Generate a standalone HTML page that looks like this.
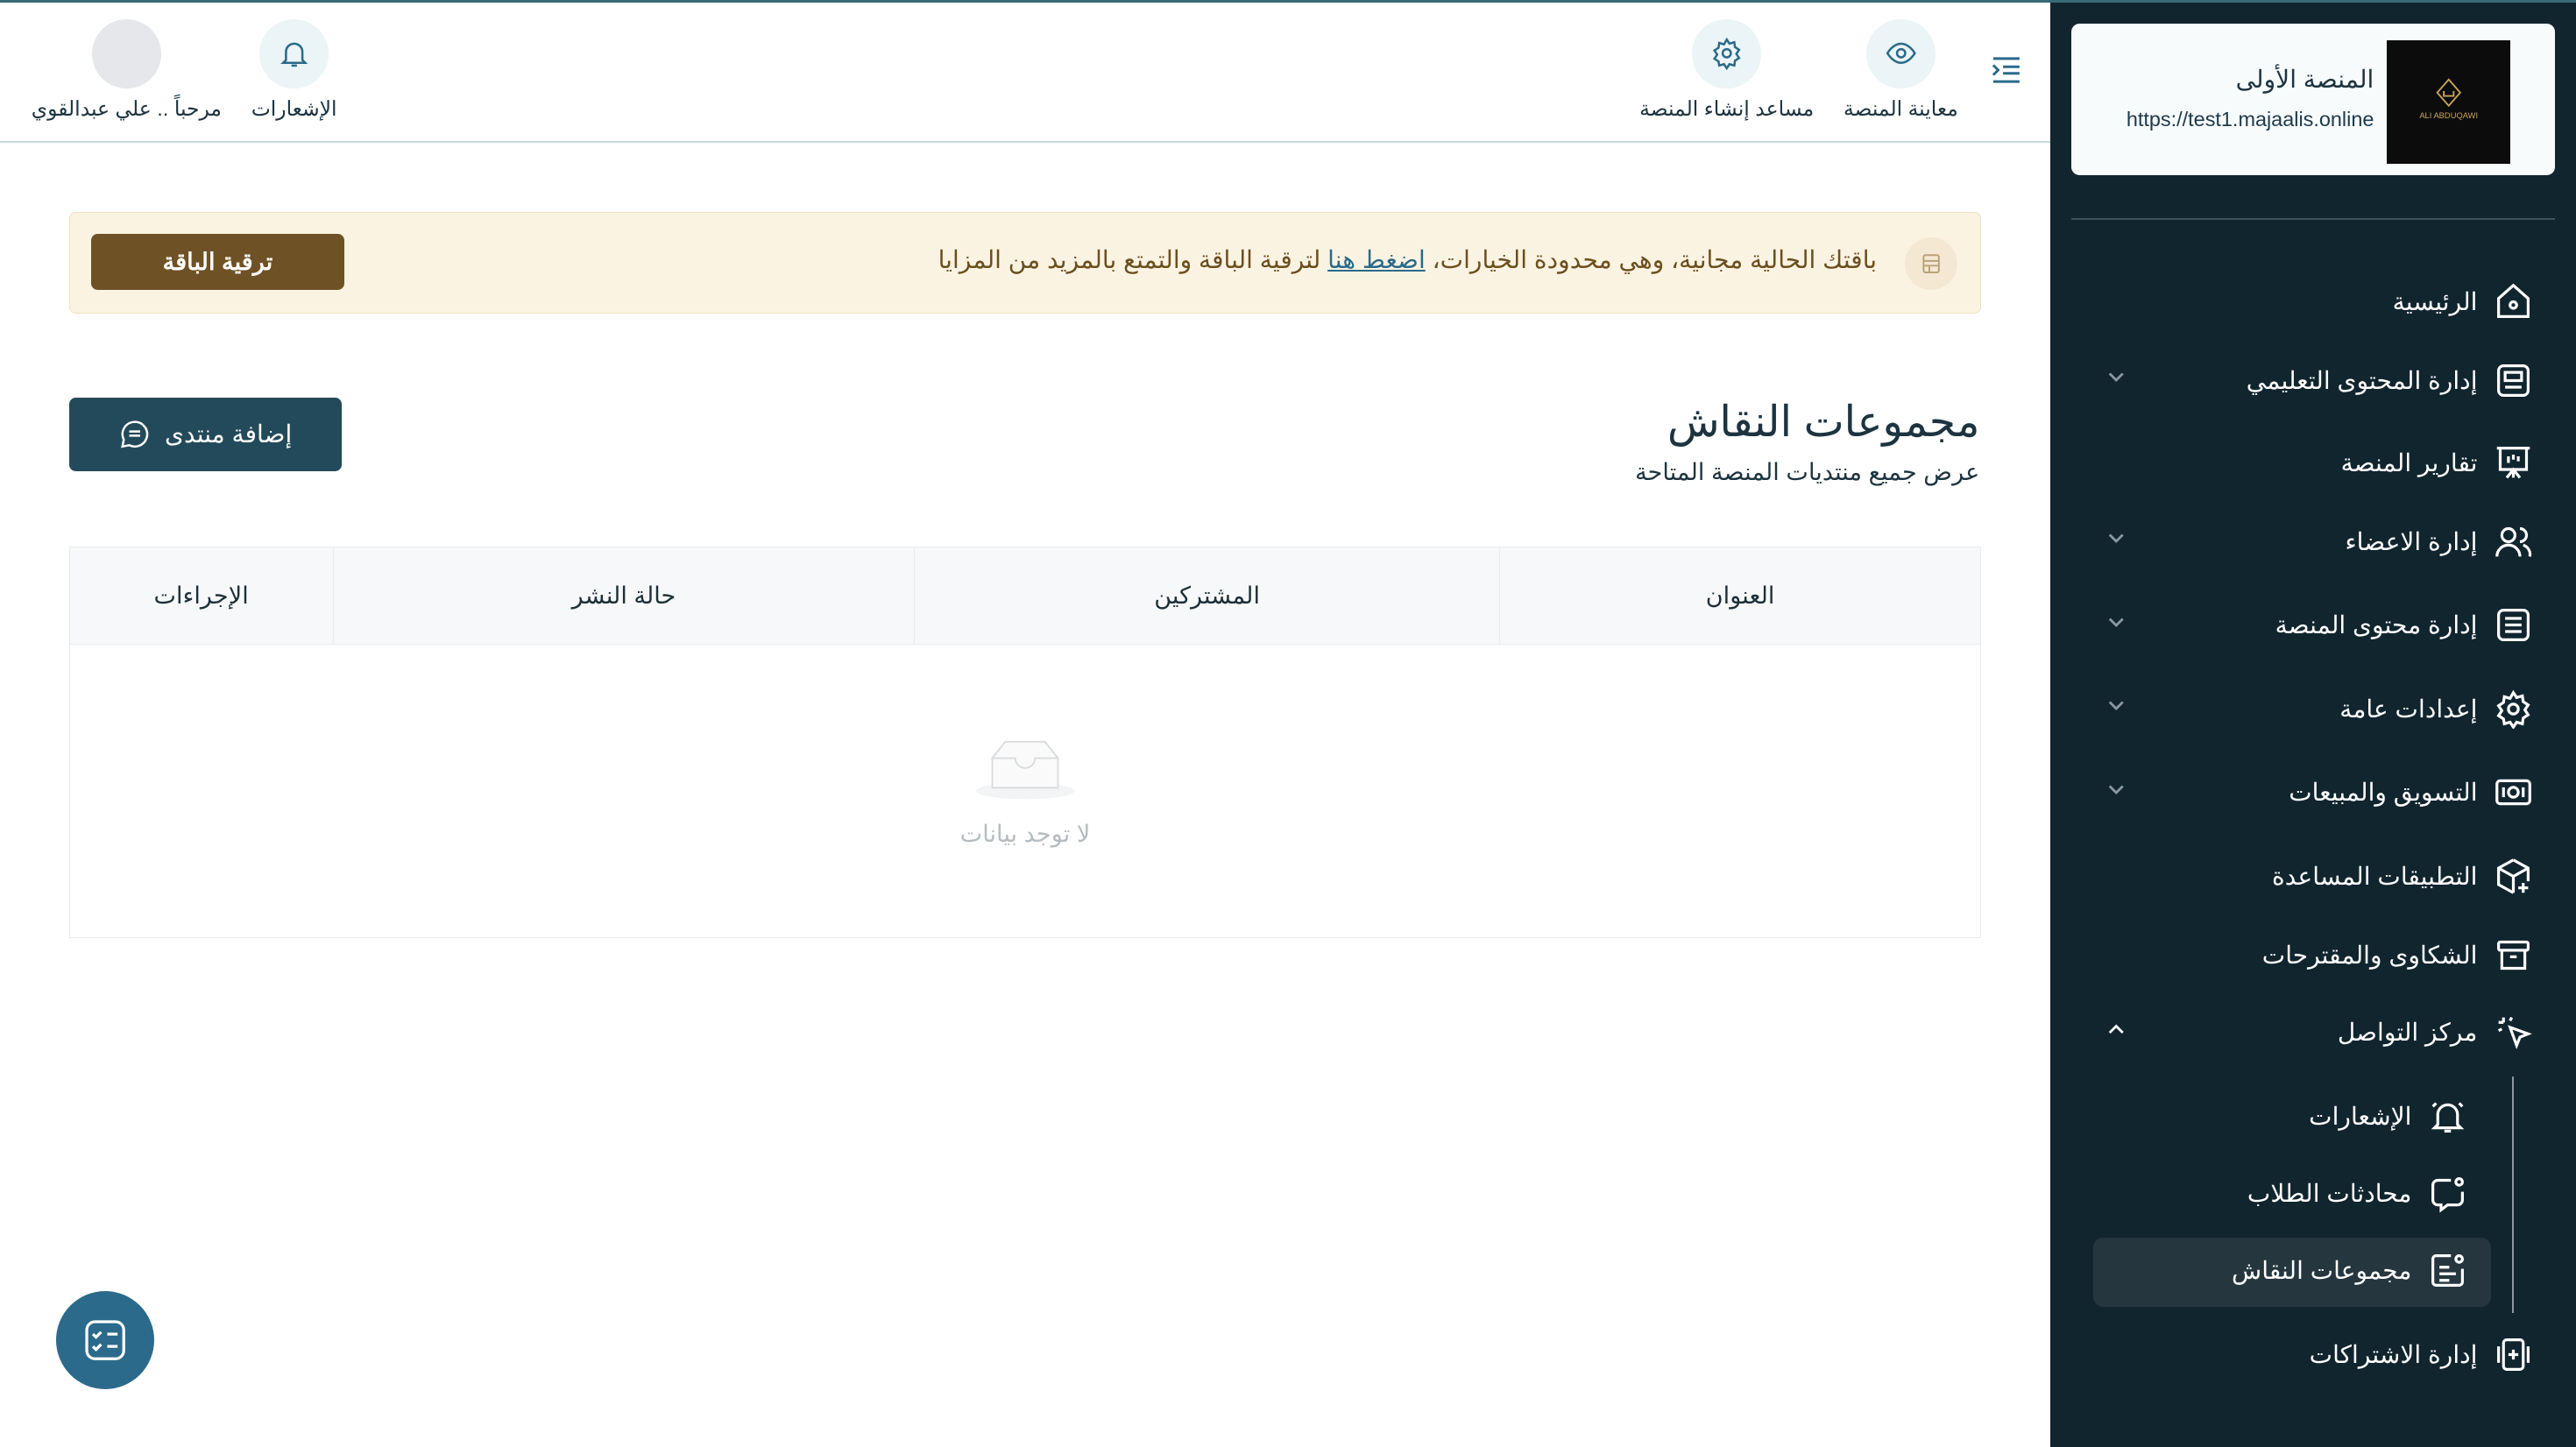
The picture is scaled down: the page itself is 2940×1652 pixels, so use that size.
<!DOCTYPE html>
<html lang="ar" dir="rtl"><head><meta charset="utf-8">
<style>
html{zoom:1.875}
*{box-sizing:border-box;margin:0;padding:0}
body{width:1568px;height:881px;overflow:hidden;background:#fff;font-family:"Liberation Sans","Noto Sans CJK SC",sans-serif;color:#1d2f38;position:relative}
.side{position:absolute;right:0;top:0;width:320px;height:881px;background:#11252f;border-top:2px solid #3a6b74}
.card{position:absolute;right:13px;top:13px;width:294px;height:92px;background:#f8fbfc;border-radius:5px}
.logo{position:absolute;right:27px;top:10px;width:75px;height:75px;background:#0c0c0c;color:#c9a45a;font-size:5px;text-align:center}
.card .t{position:absolute;right:110px;top:25px;font-size:15px;color:#1d3440}
.card .u{position:absolute;right:110px;top:51px;font-size:12.5px;color:#1d3a4a;direction:ltr}
.hr{position:absolute;right:13px;top:131px;width:294px;height:1px;background:#3e525c}
.item{position:absolute;right:26px;height:28px;display:flex;align-items:center;color:#fff;font-size:15px;gap:10px;width:260px}
.item svg{width:24px;height:24px;flex:none}
.chev{position:absolute;left:0;top:6px}
.sub{right:66px;width:200px}
.active{position:absolute;right:52px;top:752px;width:242px;height:42px;background:#25363f;border-radius:6px}
.vline{position:absolute;right:38px;top:654px;width:1px;height:144px;background:#8a99a0}
.top{position:absolute;left:0;top:0;width:1248px;height:87px;border-top:2px solid #3a6b74;border-bottom:1.5px solid #c5d9de}
.hb{position:absolute;top:10px;text-align:center;font-size:12.5px;color:#1d3440}
.circ{width:42px;height:42px;border-radius:50%;background:#ebf4f6;margin:0 auto 5px;display:flex;align-items:center;justify-content:center}
.banner{position:absolute;left:42px;top:129px;width:1164px;height:62px;background:#fbf3e2;border:1px solid #f0e0bd;border-radius:4px}
.banner .txt{position:absolute;right:63px;top:20px;font-size:15px;color:#6b4f1f}
.banner a{color:#2b6a8a;text-decoration:underline}
.bicon{position:absolute;right:14px;top:15px;width:32px;height:32px;border-radius:50%;background:#f4e8d3;display:flex;align-items:center;justify-content:center}
.upg{position:absolute;left:13px;top:13px;width:154px;height:34px;background:#6e5125;border-radius:4px;color:#fff;font-size:14.5px;font-weight:bold;text-align:center;line-height:34px}
h1{position:absolute;right:363px;top:242px;font-size:26px;font-weight:normal;color:#1d3440}
.subt{position:absolute;right:363px;top:279px;font-size:14.5px;color:#1d3440}
.add{position:absolute;left:42px;top:242px;width:166px;height:45px;background:#234a5a;border-radius:4px;color:#fff;font-size:15px;display:flex;align-items:center;justify-content:center;gap:8px}
.tbl{position:absolute;left:42px;top:333px;width:1164px;height:238px;border:1px solid #e8ecee}
.th{position:absolute;top:0;height:59px;background:#f7f8f9;border-bottom:1px solid #e8ecee;font-size:14.5px;line-height:59px;text-align:center;border-left:1px solid #e8ecee}
.empty{position:absolute;left:0;right:0;top:108px;text-align:center;color:#b4bcc0;font-size:14.5px}
.fab{position:absolute;left:34px;top:786px;width:60px;height:60px;border-radius:50%;background:#2b6a8a;display:flex;align-items:center;justify-content:center}
</style></head><body>
<div class="top">
 <svg style="position:absolute;left:1212px;top:33px" width="18" height="16" viewBox="0 0 18 16" fill="none" stroke="#2b6a8a" stroke-width="1.6"><path d="M1 1h16M7 6h10M7 10h10M1 15h16M1 5l3 3-3 3"/></svg>
 <div class="hb" style="left:1115px;width:84px"><div class="circ"><svg width="20" height="20" viewBox="0 0 24 24" fill="none" stroke="#2b6a8a" stroke-width="1.6"><path d="M2 12s4-7 10-7 10 7 10 7-4 7-10 7S2 12 2 12z"/><circle cx="12" cy="12" r="3"/></svg></div>معاينة المنصة</div>
 <div class="hb" style="left:993px;width:116px"><div class="circ"><svg width="20" height="20" viewBox="0 0 24 24" fill="none" stroke="#2b6a8a" stroke-width="1.6"><circle cx="12" cy="12" r="3"/><path d="M12 2l2 3 3.5-1 .5 3.5 3 2-2 3 2 3-3 2-.5 3.5-3.5-1-2 3-2-3-3.5 1L6 18l-3-2 2-3-2-3 3-2 .5-3.5 3.5 1z"/></svg></div>مساعد إنشاء المنصة</div>
 <div class="hb" style="left:148px;width:62px"><div class="circ"><svg width="20" height="20" viewBox="0 0 24 24" fill="none" stroke="#2b6a8a" stroke-width="1.6"><path d="M6 17V11a6 6 0 0112 0v6l2 2H4zM10 21h4"/></svg></div>الإشعارات</div>
 <div class="hb" style="left:10px;width:134px"><div class="circ" style="background:#e5e7ea"></div>مرحباً .. علي عبدالقوي</div>
</div>
<div class="banner"><div class="bicon"><svg width="14" height="14" viewBox="0 0 24 24" fill="none" stroke="#b9a27a" stroke-width="1.8"><rect x="4" y="3" width="16" height="18" rx="2"/><path d="M4 9h16M4 14h16M10 14v7"/></svg></div><div class="txt">باقتك الحالية مجانية، وهي محدودة الخيارات، <a>اضغط هنا</a> لترقية الباقة والتمتع بالمزيد من المزايا</div><div class="upg">ترقية الباقة</div></div>
<h1>مجموعات النقاش</h1>
<div class="subt">عرض جميع منتديات المنصة المتاحة</div>
<div class="add"><span>إضافة منتدى</span><svg width="20" height="20" viewBox="0 0 24 24" fill="none" stroke="#fff" stroke-width="1.6"><path d="M12 3a9 9 0 00-8 13l-1 5 5-1A9 9 0 1012 3zM8 10h8M8 13h8"/></svg></div>
<div class="tbl">
 <div class="th" style="right:0;width:293px;border-left:1px solid #e8ecee">العنوان</div>
 <div class="th" style="right:293px;width:356px">المشتركين</div>
 <div class="th" style="right:649px;width:354px">حالة النشر</div>
 <div class="th" style="right:1003px;width:160px;border-left:none">الإجراءات</div>
 <div class="empty"><svg width="64" height="46" viewBox="0 0 64 46"><ellipse cx="32" cy="40" rx="30" ry="5" fill="#f3f4f5"/><path d="M12 20l8-10h24l8 10v18H12z" fill="#fafafa" stroke="#d9dcde"/><path d="M12 20h14a6 6 0 0012 0h14" fill="none" stroke="#d9dcde"/></svg><div style="margin-top:8px">لا توجد بيانات</div></div>
</div>
<div class="fab"><svg width="30" height="30" viewBox="0 0 24 24" fill="none" stroke="#fff" stroke-width="1.4"><rect x="3" y="3" width="18" height="18" rx="4"/><path d="M6 9l1.5 1.5L10 8M6 15l1.5 1.5L10 14M13 9h5M13 15h5"/></svg></div>

<div class="side">
 <div class="card"><div class="logo"><svg width="20" height="20" viewBox="0 0 20 20" style="margin-top:22px" fill="none" stroke="#c9a45a"><path d="M10 2l7 8-7 8-7-8z"/><path d="M7 9v3h6V9"/></svg><div>ALI ABDUQAWI</div></div><div class="t">المنصة الأولى</div><div class="u">https://test1.majaalis.online</div></div>
 <div class="hr"></div>
 <div class="active"></div><div class="vline"></div>
 <div class="item" style="top:168px"><svg viewBox="0 0 24 24" fill="none" stroke="#fff" stroke-width="1.7"><path d="M3 10l9-8 9 8v11H3z"/><circle cx="12" cy="14" r="2"/></svg>الرئيسية</div>
 <div class="item" style="top:216px"><svg viewBox="0 0 24 24" fill="none" stroke="#fff" stroke-width="1.7"><rect x="3" y="3" width="18" height="18" rx="3"/><rect x="7" y="7" width="10" height="5"/><path d="M7 16h10"/></svg>إدارة المحتوى التعليمي<svg class="chev" style="width:12px;height:12px" viewBox="0 0 12 12" fill="none" stroke="#8a99a0" stroke-width="1.5"><path d="M2 4l4 4 4-4"/></svg></div>
 <div class="item" style="top:266px"><svg viewBox="0 0 24 24" fill="none" stroke="#fff" stroke-width="1.7"><path d="M2 3h20M4 3v13h16V3M9 8v4M12 7v3M15 8v3M12 16v5M8 21l4-5 4 5"/></svg>تقارير المنصة</div>
 <div class="item" style="top:314px"><svg viewBox="0 0 24 24" fill="none" stroke="#fff" stroke-width="1.7"><circle cx="9" cy="8" r="4"/><path d="M2 21a7 7 0 0114 0M16 4a4 4 0 010 8M18 14a6 6 0 014 7"/></svg>إدارة الاعضاء<svg class="chev" style="width:12px;height:12px" viewBox="0 0 12 12" fill="none" stroke="#8a99a0" stroke-width="1.5"><path d="M2 4l4 4 4-4"/></svg></div>
 <div class="item" style="top:365px"><svg viewBox="0 0 24 24" fill="none" stroke="#fff" stroke-width="1.7"><rect x="3" y="3" width="18" height="18" rx="3"/><path d="M7 8h10M7 12h10M7 16h10"/></svg>إدارة محتوى المنصة<svg class="chev" style="width:12px;height:12px" viewBox="0 0 12 12" fill="none" stroke="#8a99a0" stroke-width="1.5"><path d="M2 4l4 4 4-4"/></svg></div>
 <div class="item" style="top:416px"><svg viewBox="0 0 24 24" fill="none" stroke="#fff" stroke-width="1.7"><circle cx="12" cy="12" r="3"/><path d="M12 2l2 3 3.5-1 .5 3.5 3 2-2 3 2 3-3 2-.5 3.5-3.5-1-2 3-2-3-3.5 1L6 18l-3-2 2-3-2-3 3-2 .5-3.5 3.5 1z"/></svg>إعدادات عامة<svg class="chev" style="width:12px;height:12px" viewBox="0 0 12 12" fill="none" stroke="#8a99a0" stroke-width="1.5"><path d="M2 4l4 4 4-4"/></svg></div>
 <div class="item" style="top:467px"><svg viewBox="0 0 24 24" fill="none" stroke="#fff" stroke-width="1.7"><rect x="2" y="5" width="20" height="14" rx="2"/><circle cx="12" cy="12" r="3"/><path d="M6 9v6M18 9v6"/></svg>التسويق والمبيعات<svg class="chev" style="width:12px;height:12px" viewBox="0 0 12 12" fill="none" stroke="#8a99a0" stroke-width="1.5"><path d="M2 4l4 4 4-4"/></svg></div>
 <div class="item" style="top:518px"><svg viewBox="0 0 24 24" fill="none" stroke="#fff" stroke-width="1.7"><path d="M12 2l9 5v8M12 2L3 7v10l9 5M3 7l9 5 9-5M12 12v10M18 16v6M15 19h6"/></svg>التطبيقات المساعدة</div>
 <div class="item" style="top:566px"><svg viewBox="0 0 24 24" fill="none" stroke="#fff" stroke-width="1.7"><rect x="3" y="4" width="18" height="5" rx="1"/><path d="M5 9v11h14V9M10 13h4"/></svg>الشكاوى والمقترحات</div>
 <div class="item" style="top:613px"><svg viewBox="0 0 24 24" fill="none" stroke="#fff" stroke-width="1.7"><path d="M10 9l11 4-5 2-2 5zM6 3v3M3 6h3M3 11l2-1M11 3l-1 2"/></svg>مركز التواصل<svg class="chev" style="width:12px;height:12px" viewBox="0 0 12 12" fill="none" stroke="#fff" stroke-width="1.5"><path d="M2 8l4-4 4 4"/></svg></div>
 <div class="item sub" style="top:664px"><svg viewBox="0 0 24 24" fill="none" stroke="#fff" stroke-width="1.7"><path d="M6 17V11a6 6 0 0112 0v6l2 2H4zM10 21h4M3 6l2-2M21 6l-2-2"/></svg>الإشعارات</div>
 <div class="item sub" style="top:711px"><svg viewBox="0 0 24 24" fill="none" stroke="#fff" stroke-width="1.7"><path d="M14 4H6a3 3 0 00-3 3v9a3 3 0 003 3h2v3l4-3h6a3 3 0 003-3v-5"/><circle cx="19" cy="5" r="2"/></svg>محادثات الطلاب</div>
 <div class="item sub" style="top:758px"><svg viewBox="0 0 24 24" fill="none" stroke="#fff" stroke-width="1.7"><path d="M14 3H5a2 2 0 00-2 2v14a2 2 0 002 2h14a2 2 0 002-2v-8M7 10h6M7 14h10M7 18h6"/><circle cx="19" cy="5" r="2"/></svg>مجموعات النقاش</div>
 <div class="item" style="top:809px"><svg viewBox="0 0 24 24" fill="none" stroke="#fff" stroke-width="1.7"><rect x="6" y="3" width="12" height="18" rx="2"/><path d="M3 7v10M21 7v10M12 9v6M9 12h6"/></svg>إدارة الاشتراكات</div>
</div>
</body></html>
